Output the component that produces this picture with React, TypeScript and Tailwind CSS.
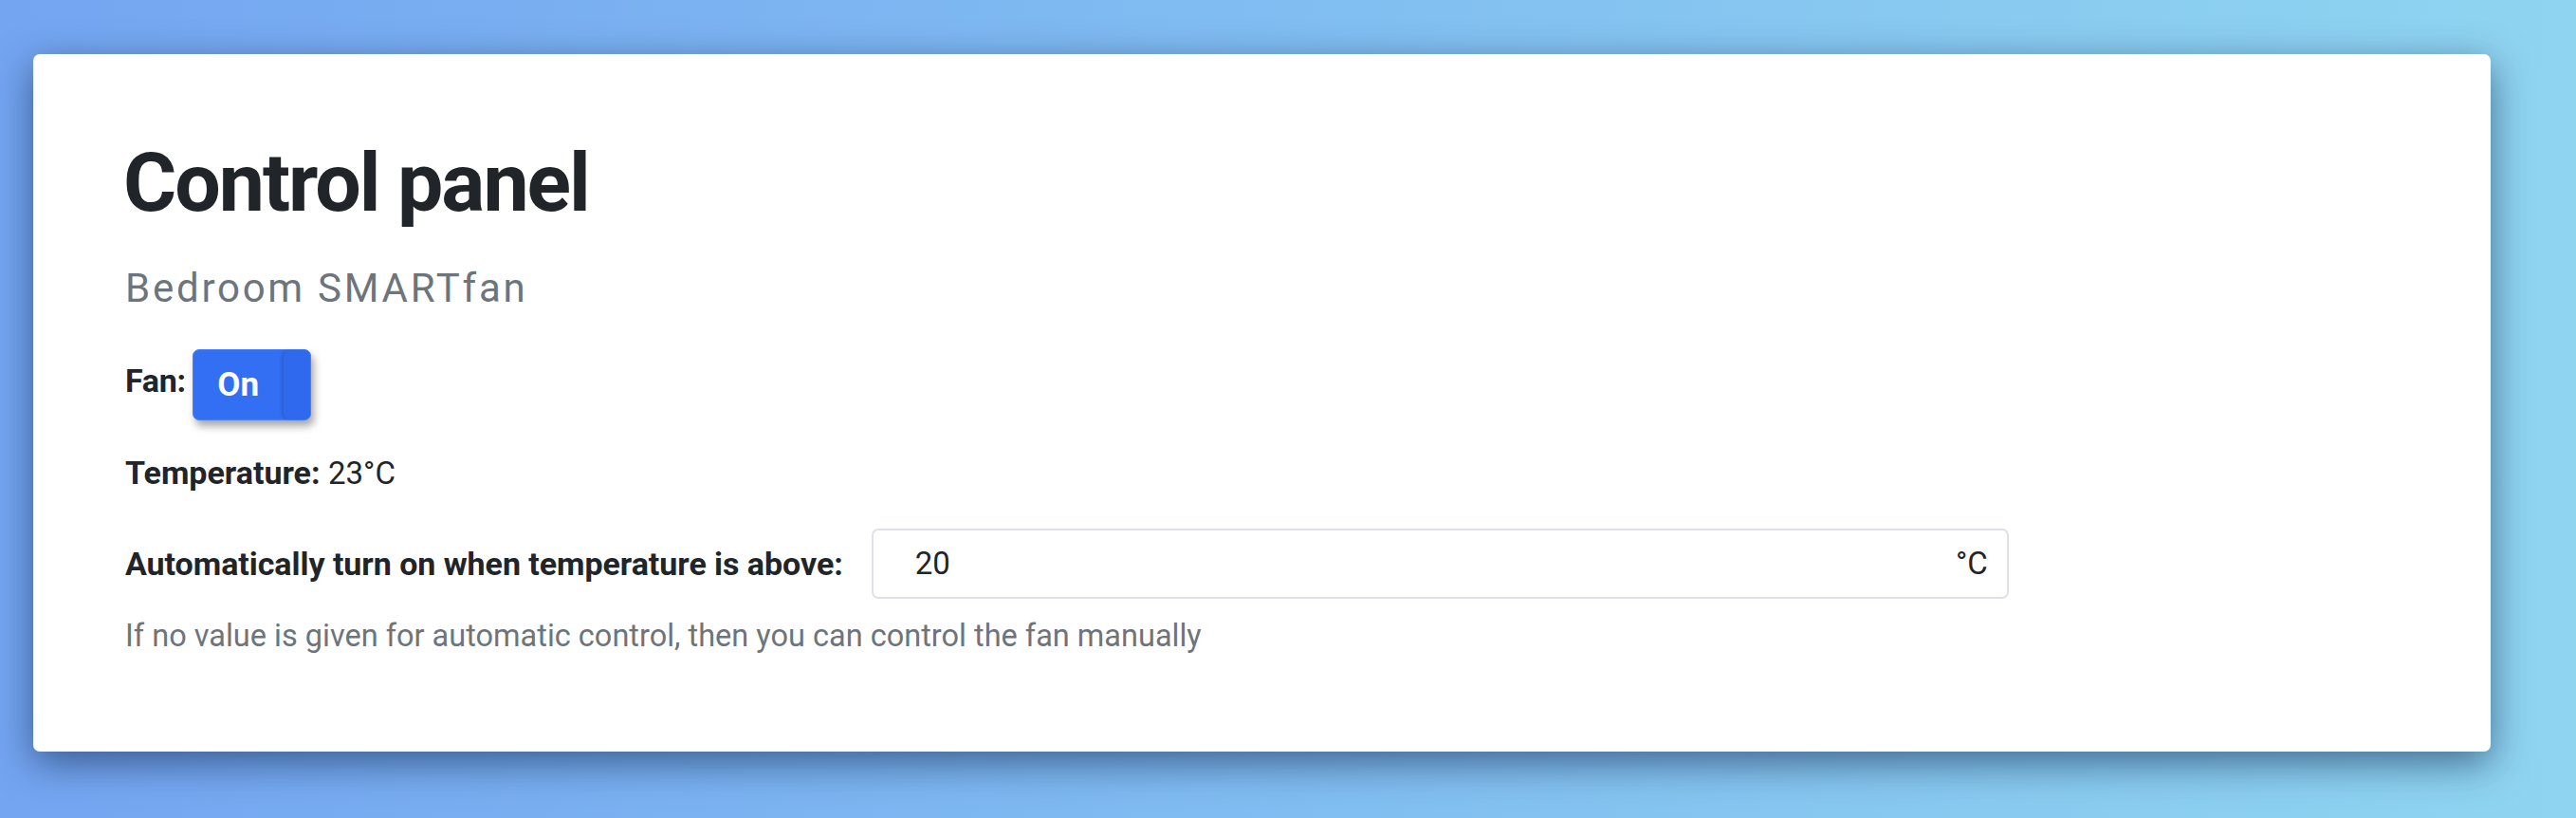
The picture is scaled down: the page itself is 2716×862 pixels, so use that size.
import { useState } from 'react';

export default function App() {
  const [fanOn, setFanOn] = useState(true);
  const [threshold, setThreshold] = useState('20');

  return (
    <div className="min-h-[862px] w-full bg-gradient-to-r from-[#74a5f1] to-[#8fd5f0] pt-[57px] pb-[70px] pl-[35px] pr-[90px] font-['Roboto',sans-serif]">
      <div className="flex flex-col rounded-[7px] bg-white pt-[93px] pb-[105px] px-[97px] shadow-[0_12px_40px_rgba(20,40,80,0.6)]">
        {/* Header */}
        <h1 className="-ml-[2px] text-[86px] leading-none font-bold tracking-[-2px] text-[#212529]">Control panel</h1>
        <p className="mt-[47px] text-[42px] leading-none tracking-[2.75px] text-[#6c757d]">Bedroom SMARTfan</p>

        {/* Fan toggle */}
        <div className="mt-[43px] flex items-start gap-[7px]">
          <span className="mt-[16px] text-[34px] leading-none font-bold tracking-[-0.3px] text-[#212529]">Fan:</span>
          <button
            onClick={() => setFanOn(!fanOn)}
            className="flex h-[75px] w-[125px] items-stretch rounded-[7px] border border-[#4a80f5] bg-[#326ff3] shadow-[3px_6px_8px_rgba(0,0,0,0.35)]"
          >
            <span className="flex flex-1 items-center justify-center text-[35px] leading-none font-bold text-white">
              {fanOn ? 'On' : 'Off'}
            </span>
            <span className="w-[28px] rounded-[7px] bg-[#2f6aee] shadow-[-2px_0_3px_rgba(0,0,0,0.15)]" />
          </button>
        </div>

        {/* Current temperature */}
        <p className="mt-[38px] text-[34px] leading-none text-[#212529]">
          <span className="font-bold">Temperature:</span> <span className="text-[33px]">23°C</span>
        </p>

        {/* Auto threshold */}
        <div className="mt-[42px] flex items-center gap-[30px]">
          <label htmlFor="threshold" className="text-[34px] leading-none font-bold tracking-[-0.05px] text-[#212529]">
            Automatically turn on when temperature is above:
          </label>
          <div className="flex h-[74px] w-[1199px] items-center rounded-[7px] border-2 border-[#dee2e6] pl-[44px] pr-[20px]">
            <input
              id="threshold"
              value={threshold}
              onChange={(e) => setThreshold(e.target.value)}
              className="min-w-0 flex-1 bg-transparent text-[33px] text-[#212529] outline-none"
            />
            <span className="text-[33px] text-[#212529]">°C</span>
          </div>
        </div>
        <p className="mt-[23px] text-[32.5px] leading-none text-[#6c757d]">
          If no value is given for automatic control, then you can control the fan manually
        </p>
      </div>
    </div>
  );
}
